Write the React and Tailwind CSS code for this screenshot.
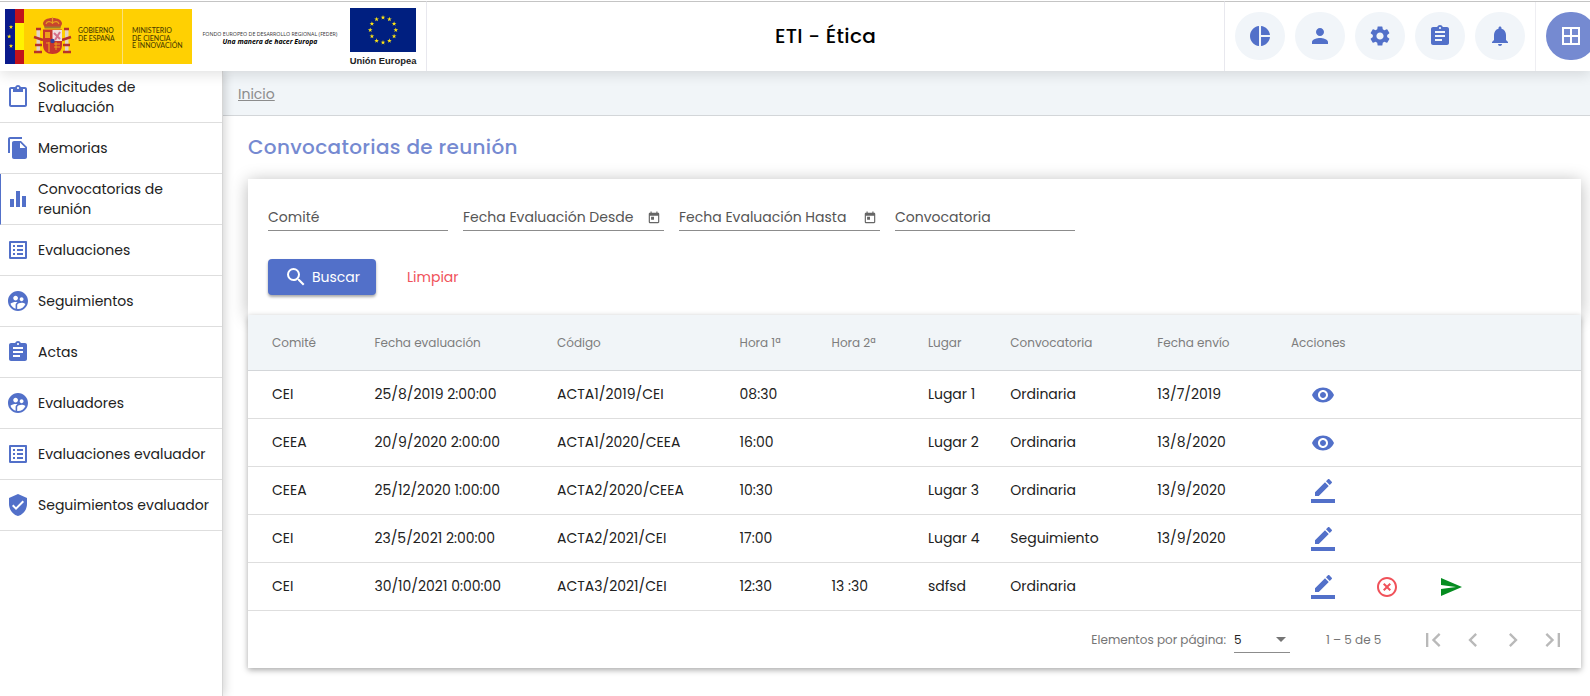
import React from 'react';
import {
  MdPieChart, MdPerson, MdSettings, MdAssignment, MdNotifications, MdBorderAll, MdContentPaste, MdFileCopy,
  MdEqualizer, MdListAlt, MdSupervisedUserCircle, MdVerifiedUser, MdSearch, MdToday, MdVisibility,
  MdHighlightOff, MdSend, MdFirstPage, MdLastPage, MdChevronLeft, MdChevronRight,
} from 'react-icons/md';

const STAR = '0,-1 .225,-.309 .951,-.309 .363,.118 .588,.809 0,.382 -.588,.809 -.363,.118 -.951,-.309 -.225,-.309';

function Star({ x, y, r }) {
  return <polygon points={STAR} fill="#ffe512" transform={`translate(${x} ${y}) scale(${r})`} />;
}

function SpainLogo() {
  return (
    <svg className="block h-[55px] w-[187px]" viewBox="0 0 187 55" preserveAspectRatio="none">
      <rect width="187" height="55" fill="#ffd002" />
      <rect width="10" height="55" fill="#0a1a8c" />
      <rect x="10" width="9" height="55" fill="#c1121c" />
      <rect x="10" y="14" width="9" height="27" fill="#fff200" />
      <Star x="6" y="18" r="2.3" /><Star x="4.2" y="27.5" r="2.3" /><Star x="6" y="37" r="2.3" />
      <rect x="117" width="1" height="55" fill="#fbe07a" />
      <g transform="translate(29 7)">
        <path d="M9 8c0-4 4-6 9.500-6S28 4 28 8l-2 4H11z" fill="#c8452c" />
        <path d="M12 8c1-3 4-3 6.500-1 2.500-2 5.500-2 6.500 1M18.500 1v7" stroke="#e8a020" strokeWidth="1.200" fill="none" />
        <rect x="10.500" y="10.500" width="16" height="2" fill="#a07a30" />
        <rect x="2.500" y="13" width="3.500" height="24" fill="#e3d3c4" /><rect x="31" y="13" width="3.500" height="24" fill="#e3d3c4" />
        <path d="M2 13h5M30 13h5M0 21l9 3M28 24l9-3M1 29h7M29 29h7M0 36h8M29 36h8" stroke="#b8322a" strokeWidth="2.400" />
        <path d="M9 13.500h19V29c0 6-4 9-9.500 9S9 35 9 29z" fill="#c8352c" />
        <path d="M18.500 14H28v11h-9.500z" fill="#f1dfe0" /><path d="M20 17l6 6M26 16l-5 8" stroke="#d4708a" strokeWidth="2" />
        <path d="M11 16h5v6h-5z" fill="#eda01c" /><path d="M12 27h3v8M15 26v10" stroke="#eda01c" strokeWidth="1.200" fill="none" />
        <path d="M20 28h6M20 31h6M22 26v8" stroke="#eda01c" />
        <circle cx="18.500" cy="25" r="2.200" fill="#31409c" />
      </g>
    </svg>
  );
}

function EuropeFlag() {
  const stars = Array.from({ length: 12 }, (_, i) => (i * Math.PI) / 6);
  return (
    <svg className="block h-[44px] w-[66px]" viewBox="0 0 66 44">
      <rect width="66" height="44" fill="#001f80" />
      {stars.map((a) => <Star key={a} x={33 + 12.800 * Math.sin(a)} y={22 - 12.500 * Math.cos(a)} r={2.5} />)}
    </svg>
  );
}

const NAV = [
  ['Solicitudes de Evaluación', MdContentPaste],
  ['Memorias', MdFileCopy],
  ['Convocatorias de reunión', MdEqualizer],
  ['Evaluaciones', MdListAlt],
  ['Seguimientos', MdSupervisedUserCircle],
  ['Actas', MdAssignment],
  ['Evaluadores', MdSupervisedUserCircle],
  ['Evaluaciones evaluador', MdListAlt],
  ['Seguimientos evaluador', MdVerifiedUser],
];

const ROWS = [
  ['CEI', '25/8/2019 2:00:00', 'ACTA1/2019/CEI', '08:30', '', 'Lugar 1', 'Ordinaria', '13/7/2019'],
  ['CEEA', '20/9/2020 2:00:00', 'ACTA1/2020/CEEA', '16:00', '', 'Lugar 2', 'Ordinaria', '13/8/2020'],
  ['CEEA', '25/12/2020 1:00:00', 'ACTA2/2020/CEEA', '10:30', '', 'Lugar 3', 'Ordinaria', '13/9/2020'],
  ['CEI', '23/5/2021 2:00:00', 'ACTA2/2021/CEI', '17:00', '', 'Lugar 4', 'Seguimiento', '13/9/2020'],
  ['CEI', '30/10/2021 0:00:00', 'ACTA3/2021/CEI', '12:30', '13 :30', 'sdfsd', 'Ordinaria', ''],
];

const HEADS = ['Comité', 'Fecha evaluación', 'Código', 'Hora 1ª', 'Hora 2ª', 'Lugar', 'Convocatoria', 'Fecha envío', 'Acciones'];
const COLS = 'grid grid-cols-[102.4px_182.6px_182.6px_92px_96.3px_82.4px_147px_133.7px_1fr] pl-6 items-center';

function EditIcon() {
  return (
    <svg className="size-6" viewBox="0 0 24 24" fill="currentColor">
      <path d="M17.750 7L14 3.250l-10 10V17h3.750l10-10zm2.960-2.960c.390-.390.390-1.020 0-1.410L18.370.290c-.390-.390-1.020-.390-1.410 0L15 2.250 18.750 6l1.960-1.960z" />
      <path d="M0 20h24v4H0z" />
    </svg>
  );
}

function Field({ label, date }) {
  return (
    <div className={`${date ? 'w-[201px]' : 'w-[180px]'} flex h-[26px] items-start justify-between border-b border-[#8c8c8c] text-[#555] leading-[24px]`}>
      <span>{label}</span>
      {date && <MdToday className="mt-[6px] mr-[3px] size-[14px] text-[#666]" />}
    </div>
  );
}

export default function App() {
  return (
    <div className="flex h-[696px] w-[1590px] flex-col overflow-hidden bg-white font-['Poppins','Inter',sans-serif] text-[14px] text-[#212121] [font-feature-settings:'cv11']">
      <header className="relative z-20 flex h-[71px] shrink-0 bg-white pt-px shadow-[0_4px_12px_rgba(0,0,0,0.11)]">
        <div className="flex w-[427px] shrink-0 border-t border-r border-[#c4c4c4] border-r-[#e8e8ee]">
          <div className="relative ml-[5px] mt-[6.500px] h-[55px] w-[187px]">
            <SpainLogo />
            <div className="absolute left-[73px] top-[18.500px] whitespace-nowrap font-['Lato',sans-serif] text-[6.800px] font-medium leading-[7.500px] text-[#4a3c00]">GOBIERNO<br />DE ESPAÑA</div>
            <div className="absolute left-[127px] top-[18.500px] whitespace-nowrap font-['Lato',sans-serif] text-[7px] font-medium leading-[7.500px] text-[#4a3c00]">MINISTERIO<br />DE CIENCIA<br />E INNOVACIÓN</div>
          </div>
          <div className="ml-[8px] mt-[28px] flex w-[140px] flex-col items-center whitespace-nowrap text-center font-['Open_Sans',sans-serif] text-[#333] leading-[8px]">
            <div className="text-[5.300px]">FONDO EUROPEO DE DESARROLLO REGIONAL (FEDER)</div>
            <div className="text-[6.900px] font-bold italic text-black">Una manera de hacer Europa</div>
          </div>
          <div className="ml-[10px] mt-[6px] w-[66px]">
            <EuropeFlag />
            <div className="mt-[3px] flex justify-center whitespace-nowrap font-['Liberation_Sans',sans-serif] text-[9.400px] font-bold leading-[12px] text-[#222]">Unión Europea</div>
          </div>
        </div>
        <div className="flex flex-1 items-center justify-center border-t border-[#c4c4c4] text-[20px] font-medium tracking-[0.3px] text-black"><span className="-mt-px">ETI - Ética</span></div>
        <div className="flex w-[366px] shrink-0 border-t border-l border-[#c4c4c4] border-l-[#e8e8ee] pt-[10px] text-[#5270c9]">
          <div className="flex w-[310px] gap-[10px] pl-[10px]">
            {[MdPieChart, MdPerson, MdSettings, MdAssignment, MdNotifications].map((Icon, i) => (
              <div key={i} className="flex h-[48px] w-[50px] items-center justify-center rounded-full bg-[#f1f5f9]"><Icon className="size-6" /></div>
            ))}
          </div>
          <div className="-mt-[10px] flex h-[69px] w-[55px] overflow-hidden border-l border-[#eeeef2] pl-[10px] pt-[10px]">
            <div className="flex h-[48px] w-[50px] shrink-0 items-center justify-center rounded-full bg-[#758ad1] text-white"><MdBorderAll className="size-6" /></div>
          </div>
        </div>
      </header>

      <div className="flex min-h-0 flex-1">
        <nav className="z-10 w-[223px] shrink-0 border-r border-[#d6d6d6] bg-white shadow-[1px_0_10px_rgba(0,0,0,0.2)]">
          {NAV.map(([label, Icon], i) => (
            <div key={label} className={`flex items-center border-b border-[#dedede] leading-5 ${i === 2 ? 'border-l border-l-[#5270c9] pl-[5px]' : 'pl-[6px]'} ${i === 0 ? 'h-[52px]' : 'h-[51px]'}`}>
              <Icon className="size-6 shrink-0 text-[#5270c9]" />
              <span className={`ml-2 ${i === 0 || i === 2 ? 'w-[140px]' : 'whitespace-nowrap'}`}>{label}</span>
            </div>
          ))}
        </nav>

        <main className="flex min-w-0 flex-1 flex-col">
          <div className="h-[45px] border-b border-[#d3d6d9] bg-[#f1f5f8] pl-[15px] pt-[13px] leading-5 text-[#8c8c8c]"><span className="underline">Inicio</span></div>
          <h1 className="ml-[25px] mt-[16px] h-[30px] text-[20px] font-medium tracking-[0.34px] leading-[30px] text-[#758ad1]">Convocatorias de reunión</h1>
          <div className="ml-[25px] mt-[17px] w-[1333px]">
            <section className="h-[136px] bg-white px-5 pt-[26px] shadow-[0_2px_16px_rgba(0,0,0,0.28)]">
              <div className="flex gap-[15px]">
                <Field label="Comité" />
                <Field label="Fecha Evaluación Desde" date />
                <Field label="Fecha Evaluación Hasta" date />
                <Field label="Convocatoria" />
              </div>
              <div className="mt-[28px] flex items-center">
                <button className="flex h-9 w-[108px] items-center rounded bg-[#5270c9] pl-4 text-white shadow-[0_2px_3px_rgba(0,0,0,0.35)]"><MdSearch className="mr-1 size-6" />Buscar</button>
                <span className="ml-[31px] text-[#f0525a]">Limpiar</span>
              </div>
            </section>
            <section className="relative h-[353px] bg-white shadow-[0_2px_6px_rgba(0,0,0,0.35)]">
              <div className={`${COLS} h-[56px] border-b border-[#d3d6d9] bg-[#f1f5f8] text-[12px] text-[#7d7d7d]`}>
                {HEADS.map((h) => <span key={h}>{h}</span>)}
              </div>
              {ROWS.map((row, r) => (
                <div key={r} className={`${COLS} h-12 whitespace-nowrap border-b border-[#dedede]`}>
                  {row.map((c, i) => <span key={i}>{c}</span>)}
                  <div className="flex gap-10 pl-5 text-[#5270c9]">
                    {r < 2 ? <MdVisibility className="size-6" /> : <EditIcon />}
                    {r === 4 && <MdHighlightOff className="size-6 text-[#f0525a]" />}
                    {r === 4 && <MdSend className="size-6 text-[#058c20]" />}
                  </div>
                </div>
              ))}
              <div className="flex h-[57px] items-center justify-end text-[12px] text-[#757575]">
                <span className="mt-px">Elementos por página:</span>
                <div className="ml-2 flex h-[26px] w-[56px] items-center justify-between border-b border-[#8c8c8c] pt-px text-[#212121]">
                  5<svg className="mr-1 h-[5px] w-[10px]" viewBox="0 0 10 5"><path d="M0 0h10L5 5z" fill="#757575" /></svg>
                </div>
                <span className="ml-[36px] w-[56px] whitespace-nowrap">1 – 5 de 5</span>
                <div className="ml-[31px] mr-[8px] flex text-[#b9b9b9]">
                  {[MdFirstPage, MdChevronLeft, MdChevronRight, MdLastPage].map((Icon, i) => (
                    <span key={i} className="flex size-10 items-center justify-center"><Icon className="size-7" /></span>
                  ))}
                </div>
              </div>
            </section>
          </div>
        </main>
      </div>
    </div>
  );
}
